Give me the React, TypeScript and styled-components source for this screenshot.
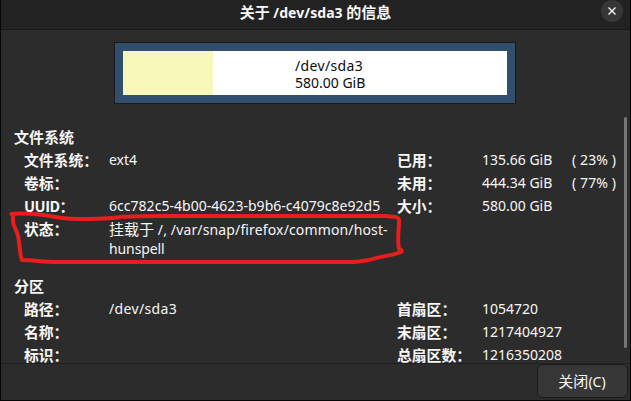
import React from "react";
import styled, { createGlobalStyle } from "styled-components";

const GlobalStyle = createGlobalStyle`
  * { box-sizing: border-box; }
  html, body { margin: 0; background: #000; overflow: hidden; }
`;

const Window = styled.div`
  position: relative;
  width: 631px;
  height: 401px;
  border: solid #050505;
  border-width: 0 1px 1px 1px;
  background: #2c2c2c;
  color: #f7f7f7;
  display: flex;
  flex-direction: column;
  overflow: hidden;
  font-family: "Noto Sans", "Noto Sans CJK SC", sans-serif;
  font-size: 14px;
  line-height: 19px;
`;

const TitleBar = styled.header`
  flex: none;
  height: 30px;
  display: grid;
  grid-template-columns: 30px 1fr 30px;
  background: #222;
  border-bottom: 1px solid #181818;
`;

const Title = styled.h1`
  grid-column: 2;
  margin: 0;
  padding: 2px 0 0 0;
  text-align: center;
  font-size: 14px;
  line-height: 20px;
  font-weight: 700;
  white-space: pre;
`;

const CloseIcon = styled.button`
  width: 22px;
  height: 22px;
  margin-left: 1px;
  padding: 0;
  border: 0;
  border-radius: 50%;
  background: #373737;
  display: grid;
  place-items: center;
`;

const Cjk = styled.span`
  font-family: "Noto Sans CJK SC", sans-serif;
  font-size: 15px;
`;

const Latin = styled.span<{ $spacing?: number }>`
  letter-spacing: ${(p) => p.$spacing ?? 0}px;
  white-space: pre;
`;

const Partition = styled.section`
  flex: none;
  width: 402px;
  height: 62px;
  margin: 12px 0 0 113px;
  border: 1px solid #1a1a1a;
  background: #314e6c;
  padding: 8px;
  display: flex;
`;

const UsedSpace = styled.div`
  width: 90px;
  background: #f8f8ba;
`;

const FreeSpace = styled.div`
  flex: 1;
  background: #fff;
  color: #0c0c0c;
  padding: 6px 0 0 82px;
  line-height: 17px;
`;

const Content = styled.main`
  flex: none;
  height: 260px;
  display: flex;
  overflow: hidden;
  border-bottom: 1px solid #202020;
  padding-top: 13px;
`;

const Details = styled.div`
  width: 623px;
  height: 246px;
  overflow: hidden;
  padding: 8px 0 0 13px;
`;

const Heading = styled.h2`
  margin: 0;
  height: 23px;
  line-height: 23px;
  font-size: 15px;
  font-weight: 700;
  font-family: "Noto Sans CJK SC", sans-serif;
`;

const Row = styled.div<{ $tall?: boolean }>`
  height: ${(p) => (p.$tall ? 57 : 23)}px;
  padding-left: 10px;
  display: grid;
  grid-template-columns: 85px 288px 85px 90px 1fr;
  line-height: 23px;
  white-space: nowrap;
`;

const Label = styled.div`
  font-family: "Noto Sans CJK SC", sans-serif;
  font-size: 14.8px;
  font-weight: 700;
`;

const Value = styled.div``;

const SecondLine = styled.div`
  line-height: 16px;
  letter-spacing: -0.1px;
`;

const ScrollThumb = styled.div`
  width: 3px;
  height: 231px;
  border-radius: 2px;
  background: #777;
`;

const Footer = styled.footer`
  display: flex;
  justify-content: flex-end;
  padding-right: 2px;
`;

const CloseButton = styled.button`
  width: 91px;
  height: 34px;
  padding: 0 1px 0 0;
  border: 1px solid #1b1b1b;
  border-radius: 6px;
  background: #373737;
  color: #f7f7f7;
  font: inherit;
`;

const Annotation = styled.svg`
  position: absolute;
  left: 0;
  top: 200px;
  pointer-events: none;
`;

type RowData = {
  id: string;
  label: React.ReactNode;
  value?: React.ReactNode;
  label2?: string;
  value2?: React.ReactNode;
  extra?: React.ReactNode;
  tall?: boolean;
};

const fileSystem: RowData[] = [
  {
    id: "type",
    label: "文件系统：",
    value: "ext4",
    label2: "已用：",
    value2: "135.66 GiB",
    extra: <Latin $spacing={0.1}>( 23% )</Latin>,
  },
  {
    id: "volume",
    label: "卷标：",
    label2: "未用：",
    value2: "444.34 GiB",
    extra: <Latin $spacing={0.1}>( 77% )</Latin>,
  },
  {
    id: "uuid",
    label: (
      <>
        <Latin $spacing={-0.5}>UUID</Latin>：
      </>
    ),
    value: <Latin $spacing={0.03}>6cc782c5-4b00-4623-b9b6-c4079c8e92d5</Latin>,
    label2: "大小：",
    value2: "580.00 GiB",
  },
  {
    id: "status",
    label: "状态：",
    tall: true,
    value: (
      <>
        <Cjk>挂载于</Cjk>
        <Latin $spacing={0.14}> /, /var/snap/firefox/common/host-</Latin>
        <SecondLine>hunspell</SecondLine>
      </>
    ),
  },
];

const partition: RowData[] = [
  {
    id: "path",
    label: "路径：",
    value: <Latin $spacing={0.35}>/dev/sda3</Latin>,
    label2: "首扇区：",
    value2: "1054720",
  },
  { id: "name", label: "名称：", label2: "末扇区：", value2: "1217404927" },
  { id: "flags", label: "标识：", label2: "总扇区数：", value2: "1216350208" },
];

const Rows = ({ items }: { items: RowData[] }) => (
  <>
    {items.map((r) => (
      <Row key={r.id} $tall={r.tall}>
        <Label>{r.label}</Label>
        <Value>{r.value}</Value>
        <Label>{r.label2}</Label>
        <Value>{r.value2}</Value>
        <Value>{r.extra}</Value>
      </Row>
    ))}
  </>
);

export default function App() {
  return (
    <>
      <GlobalStyle />
      <Window>
        <TitleBar>
          <Title>
            <Cjk>关于</Cjk>
            <Latin $spacing={0.05}> /dev/sda3 </Latin>
            <Cjk>的信息</Cjk>
          </Title>
          <CloseIcon aria-label="关闭">
            <svg width="8" height="8" viewBox="0 0 8 8">
              <path d="M.5.5 7.5 7.5M7.5.5.5 7.5" stroke="#f4f4f4" strokeWidth="1.4" />
            </svg>
          </CloseIcon>
        </TitleBar>
        <Partition>
          <UsedSpace />
          <FreeSpace>
            <div>
              <Latin $spacing={0.35}>/dev/sda3</Latin>
            </div>
            <div>580.00 GiB</div>
          </FreeSpace>
        </Partition>
        <Content>
          <Details>
            <Heading>文件系统</Heading>
            <Rows items={fileSystem} />
            <Heading>分区</Heading>
            <Rows items={partition} />
          </Details>
          <ScrollThumb />
        </Content>
        <Footer>
          <CloseButton>
            <Cjk>关闭</Cjk>(C)
          </CloseButton>
        </Footer>
        <Annotation width="420" height="70" viewBox="1 200 420 70">
          <path
            d="M11.500 214 C18 213 34 214 44 215 C54 217 65 219 77 219 C94 219 108 219 120 217 C132 216 145 216 160 216 H386 C394 217 399 216 399 221 C399 230 397 240 399 249 Q403 250 401 252 C393 255 379 257 369 260 Q358 262 350 262 H56 C43 262 34 260 22 260 C20 257 20 245 18 236 C16 228 13 226 13 221 V215"
            fill="none"
            stroke="#e81d1d"
            strokeWidth="4"
            strokeLinecap="round"
            strokeLinejoin="round"
          />
        </Annotation>
      </Window>
    </>
  );
}
